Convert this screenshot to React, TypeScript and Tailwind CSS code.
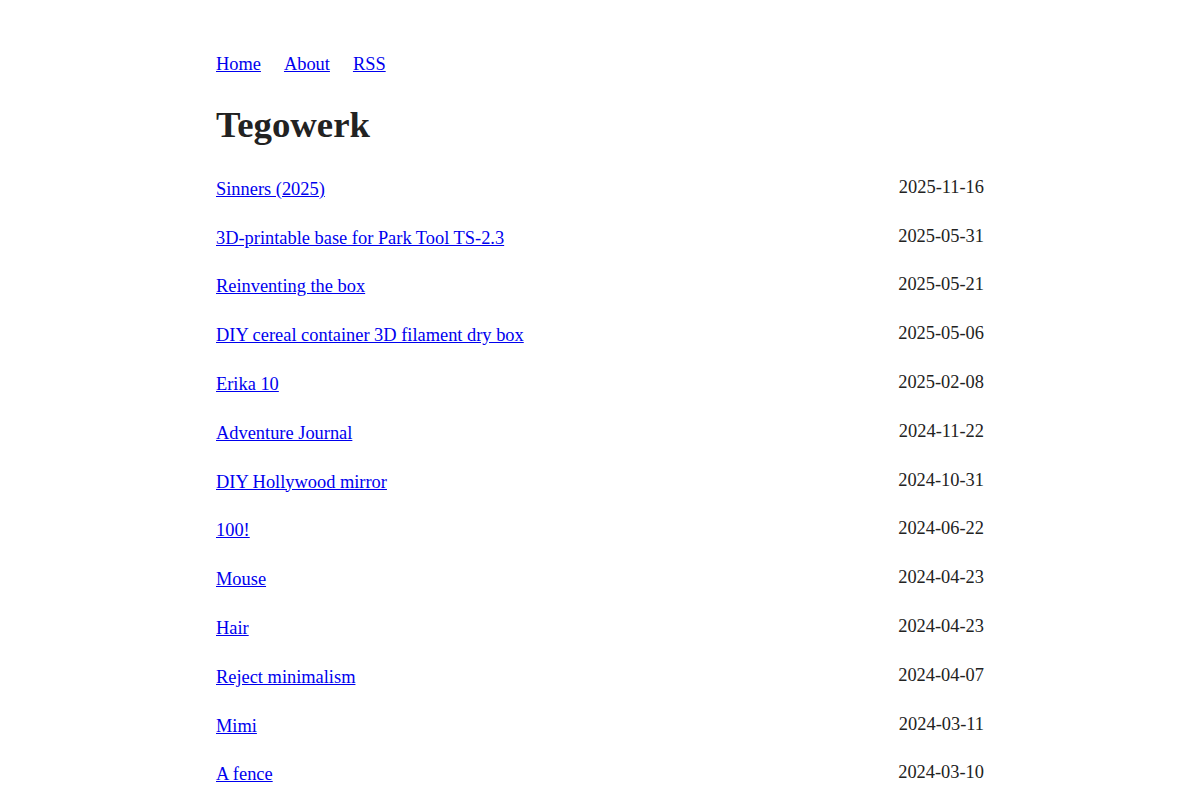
const POSTS: [string, string][] = [
  ["Sinners (2025)", "2025-11-16"],
  ["3D-printable base for Park Tool TS-2.3", "2025-05-31"],
  ["Reinventing the box", "2025-05-21"],
  ["DIY cereal container 3D filament dry box", "2025-05-06"],
  ["Erika 10", "2025-02-08"],
  ["Adventure Journal", "2024-11-22"],
  ["DIY Hollywood mirror", "2024-10-31"],
  ["100!", "2024-06-22"],
  ["Mouse", "2024-04-23"],
  ["Hair", "2024-04-23"],
  ["Reject minimalism", "2024-04-07"],
  ["Mimi", "2024-03-11"],
  ["A fence", "2024-03-10"],
];

export default function App() {
  return (
    <div className="min-h-screen bg-white font-['Liberation_Serif','Times_New_Roman',serif] text-[18.4px] text-[#222]">
      <div className="mx-auto w-[768px] pt-[50px]">
        <nav className="flex gap-[23px] leading-[28.8px]">
          <a href="#" className="text-[#0000ee] underline">Home</a>
          <a href="#" className="text-[#0000ee] underline">About</a>
          <a href="#" className="text-[#0000ee] underline">RSS</a>
        </nav>
        <h1 className="mt-[24px] text-[36.8px] font-bold leading-[43px] text-[#222]">Tegowerk</h1>
        <ul className="mt-[29px]">
          {POSTS.map(([title, date]) => (
            <li key={title + date} className="mb-5 flex items-start justify-between">
              <a href="#" className="leading-[28.8px] text-[#0000ee] underline">
                {title}
              </a>
              <span className="leading-6">{date}</span>
            </li>
          ))}
        </ul>
      </div>
    </div>
  );
}
